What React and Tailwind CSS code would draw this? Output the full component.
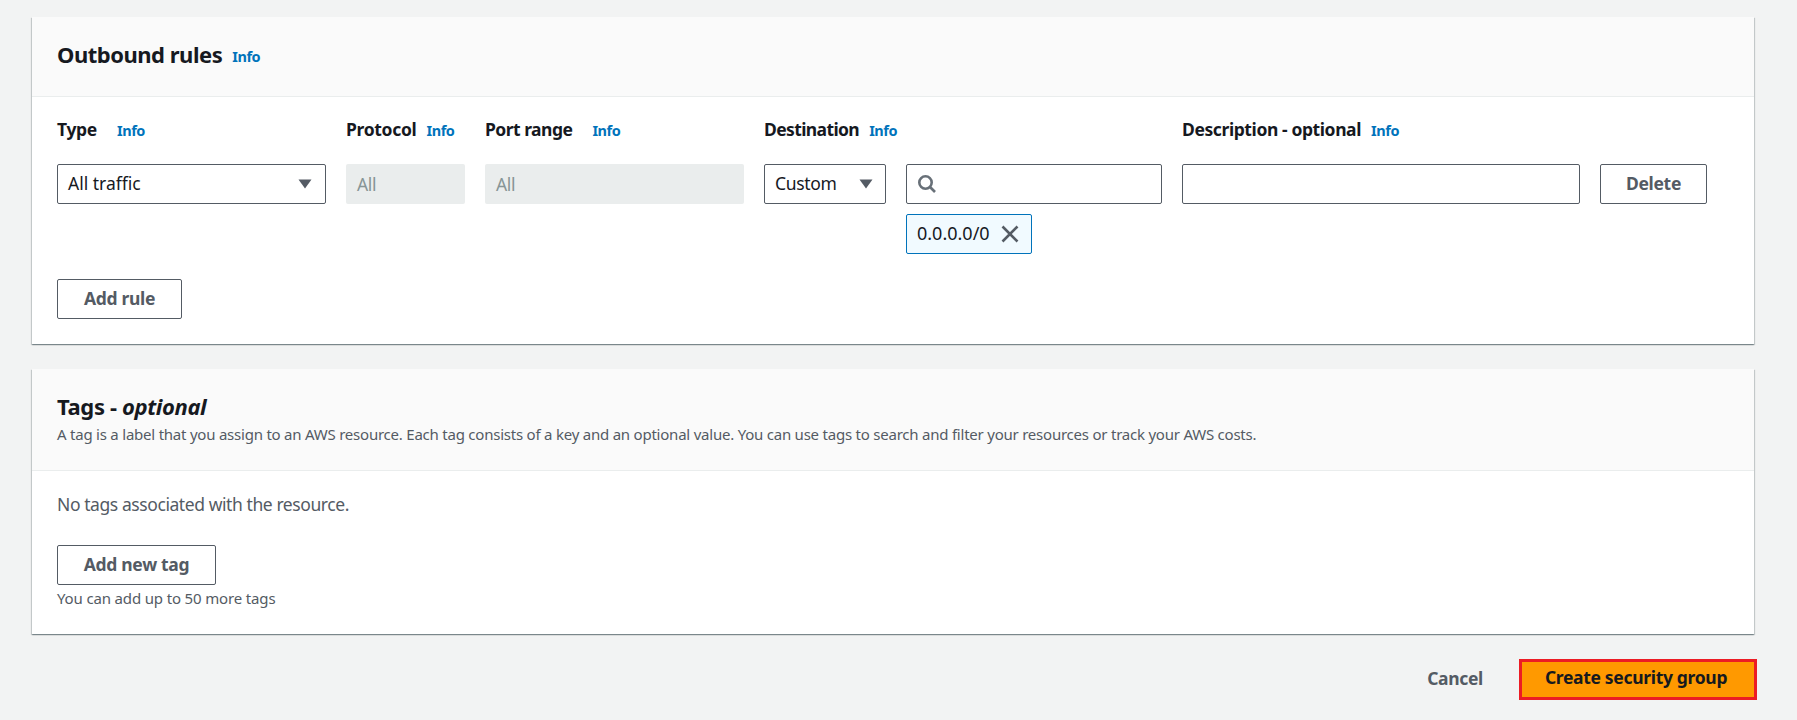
import React from "react";

const font = "font-['Noto_Sans','Open_Sans',sans-serif]";

function Info({ className = "" }) {
  return <span className={`text-[14.5px] leading-[20px] font-bold tracking-[-0.03em] text-[#0073bb] ${className}`}>Info</span>;
}

function Caret() {
  return (
    <svg width="14" height="10" viewBox="0 0 14 10" className="shrink-0">
      <path d="M0.5 0.5h13L7 9.5z" fill="#545b64" />
    </svg>
  );
}

function Label({ text, gap, track = "" }) {
  return (
    <div className="flex items-center">
      <span className={`text-[17.5px] leading-[22px] font-bold text-[#16191f] ${track}`}>{text}</span>
      <Info className={`mt-px ${gap}`} />
    </div>
  );
}

function Btn({ children, className = "" }) {
  return (
    <div className={`h-10 flex items-center justify-center border border-[#545b64] rounded-[2px] bg-white text-[17.5px] font-bold text-[#545b64] ${className}`}>
      <span className="-translate-y-px">{children}</span>
    </div>
  );
}

const cardShadow = "shadow-[0_1px_1px_0_rgba(0,28,36,0.3),1px_1px_1px_0_rgba(0,28,36,0.15),-1px_1px_1px_0_rgba(0,28,36,0.15)]";

export default function App() {
  return (
    <div className={`${font} tracking-[-0.02em] w-full h-[720px] overflow-hidden bg-[#f2f3f3] px-8 pt-[17px]`}>
      <div className={`w-[1722px] h-[327px] bg-white ${cardShadow}`}>
        <div className="h-[80px] bg-[#fafafa] border-b border-[#eaeded] pl-[25px] pt-[23px] flex items-start">
          <h2 className="text-[22px] leading-[28px] font-bold text-[#16191f] tracking-[-0.022em]">Outbound rules</h2>
          <Info className="ml-[10px] mt-[6px]" />
        </div>
        <div className="pl-[25px] pt-[20px]">
          <div className="flex h-[24px] items-center">
            <div className="w-[289px]"><Label text="Type" gap="ml-[20px]" /></div>
            <div className="w-[139px]"><Label text="Protocol" gap="ml-[10px]" /></div>
            <div className="w-[279px]"><Label text="Port range" gap="ml-[20px]" track="tracking-[-0.03em]" /></div>
            <div className="w-[418px]"><Label text="Destination" gap="ml-[10px]" track="tracking-[-0.035em]" /></div>
            <Label text="Description - optional" gap="ml-[10px]" track="tracking-[-0.023em]" />
          </div>
          <div className="flex mt-[23px] gap-[20px] items-start text-[17.5px] text-[#16191f]">
            <div className="w-[269px] h-10 border border-[#545b64] rounded-[2px] flex items-center justify-between pl-[10px] pr-[13px]">
              <span className="tracking-normal -translate-y-px">All traffic</span>
              <Caret />
            </div>
            <div className="w-[119px] h-10 bg-[#eaeded] rounded-[2px] flex items-center pl-[11px] text-[#879596]">All</div>
            <div className="w-[259px] h-10 bg-[#eaeded] rounded-[2px] flex items-center pl-[11px] text-[#879596]">All</div>
            <div className="w-[122px] h-10 border border-[#545b64] rounded-[2px] flex items-center justify-between pl-[10px] pr-[12px]">
              <span className="-translate-y-px">Custom</span>
              <Caret />
            </div>
            <div className="w-[256px]">
              <div className="h-10 border border-[#545b64] rounded-[2px] flex items-center pl-[10px]">
                <svg width="20" height="20" viewBox="0 0 20 20" fill="none" stroke="#687078" strokeWidth="2.6">
                  <circle cx="8.5" cy="8.5" r="6.2" />
                  <path d="M13 13l5 5" />
                </svg>
              </div>
              <div className="mt-[10px] w-[126px] h-10 border border-[#0073bb] rounded-[2px] bg-[#f1faff] flex items-center pl-[10px]">
                <span className="tracking-normal text-[18px] -translate-y-px">0.0.0.0/0</span>
                <svg width="18" height="18" viewBox="0 0 18 18" fill="none" stroke="#545b64" strokeWidth="2.6" className="ml-[11px]">
                  <path d="M1.5 1.5l15 15M16.5 1.5l-15 15" />
                </svg>
              </div>
            </div>
            <div className="w-[398px] h-10 border border-[#545b64] rounded-[2px]" />
            <Btn className="w-[107px]">Delete</Btn>
          </div>
          <Btn className="w-[125px] mt-[25px]">Add rule</Btn>
        </div>
      </div>

      <div className={`mt-[25px] w-[1722px] h-[265px] bg-white ${cardShadow}`}>
        <div className="h-[102px] bg-[#fafafa] border-b border-[#eaeded] pl-[25px] pt-[23px]">
          <h2 className="text-[22px] leading-[28px] font-bold text-[#16191f] tracking-[-0.017em]">Tags - <em>optional</em></h2>
          <p className="text-[15px] leading-[20px] mt-[4px] text-[#545b64] tracking-[-0.015em]">A tag is a label that you assign to an AWS resource. Each tag consists of a key and an optional value. You can use tags to search and filter your resources or track your AWS costs.</p>
        </div>
        <div className="pl-[25px] pt-[22px]">
          <p className="text-[17.5px] leading-[22px] text-[#545b64] tracking-[-0.024em]">No tags associated with the resource.</p>
          <Btn className="w-[159px] mt-[30px]">Add new tag</Btn>
          <p className="text-[15px] leading-[20px] text-[#545b64] mt-[3px] tracking-[-0.01em]">You can add up to 50 more tags</p>
        </div>
      </div>

      <div className="w-[1725px] mt-[25px] flex justify-end items-center">
        <span className="text-[17.5px] leading-[24px] font-bold text-[#545b64] mr-[36px] -translate-y-[2px]">Cancel</span>
        <div className="w-[238px] h-[41px] bg-[#ff9900] border-[3px] border-[#ec1c24] flex items-center justify-center pr-[4px] text-[17.5px] font-bold text-[#16191f]">
          <span className="-translate-y-[2px]">Create security group</span>
        </div>
      </div>
    </div>
  );
}
